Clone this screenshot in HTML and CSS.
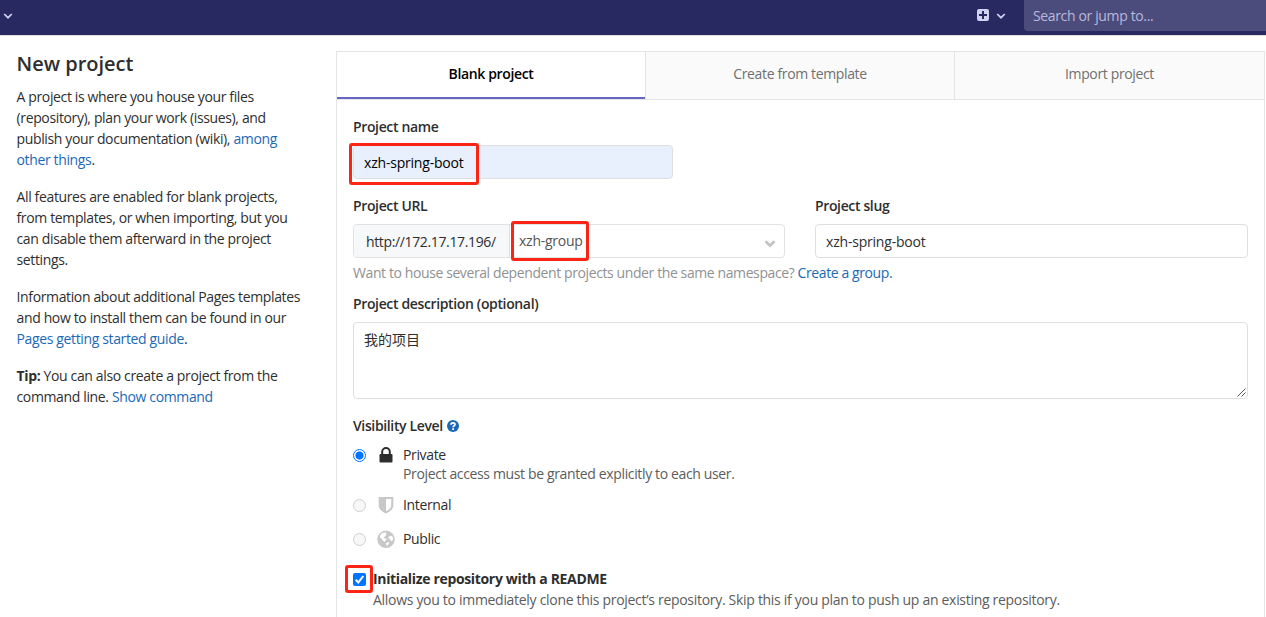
FILE: index.html
```html
<!DOCTYPE html>
<html lang="en">
<head>
<meta charset="utf-8">
<title>New project</title>
<link rel="stylesheet" href="styles.css">
</head>
<body>
<header class="navbar">
  <svg class="caret" width="10" height="6" viewBox="0 0 10 6"><path d="M1.2 1 5 4.7 8.8 1"/></svg>
  <div class="nav-right">
    <svg class="plus" width="12" height="12" viewBox="0 0 12 12"><rect width="12" height="12" rx="2" fill="#d1d1f0"/><path d="M6 2v8M2 6h8" stroke="#292961" stroke-width="2"/></svg>
    <svg class="caret" width="10" height="6" viewBox="0 0 10 6"><path d="M1.2 1 5 4.7 8.8 1"/></svg>
    <div class="search"><span>Search or jump to...</span></div>
  </div>
</header>
<div class="page">
  <aside class="sidebar">
    <h1>New project</h1>
    <p>A project is where you house your files<br>(repository), plan your work (issues), and<br>publish your documentation (wiki), <a>among<br>other things</a>.</p>
    <p>All features are enabled for blank projects,<br>from templates, or when importing, but you<br>can disable them afterward in the project<br>settings.</p>
    <p>Information about additional Pages templates<br>and how to install them can be found in our<br><a>Pages getting started guide</a>.</p>
    <p><strong>Tip:</strong> You can also create a project from the<br>command line. <a>Show command</a></p>
  </aside>
  <main class="panel">
    <nav class="tabs">
      <div class="tab active"><span>Blank project</span></div>
      <div class="tab"><span>Create from template</span></div>
      <div class="tab"><span>Import project</span></div>
    </nav>
    <form class="form">
      <div class="label">Project name</div>
      <div class="field name"><span class="value">xzh-spring-boot</span><i class="mark mark-name"></i></div>
      <div class="columns">
        <div class="column">
          <div class="label">Project URL</div>
          <div class="group">
            <div class="prefix"><span>http://172.17.17.196/</span></div>
            <div class="select"><span>xzh-group</span><svg width="12" height="8" viewBox="0 0 12 8"><path d="M1.500 1.300 6 5.600l4.500-4.300" fill="none" stroke="#c4c4c4" stroke-width="2.800"/></svg><i class="mark mark-group"></i></div>
          </div>
        </div>
        <div class="column">
          <div class="label">Project slug</div>
          <div class="field"><span class="value">xzh-spring-boot</span></div>
        </div>
      </div>
      <div class="help">Want to house several dependent projects under the same namespace? <a>Create a group.</a></div>
      <div class="label description">Project description (optional)</div>
      <div class="textarea"><span>我的项目</span><svg class="grip" width="9" height="9" viewBox="0 0 9 9"><path d="M.5 8.500l8-8M4.500 8.500l4-4" stroke="#555" stroke-width="1"/></svg></div>
      <div class="label visibility"><span>Visibility Level</span><svg width="12" height="12" viewBox="0 0 12 12"><circle cx="6" cy="6" r="6" fill="#1b69b6"/><path d="M4 4.700C4 2.300 8 2.200 8 4.500 8 5.800 6.100 5.800 6.100 7.300" fill="none" stroke="#fff" stroke-width="1.700"/><path d="M5.200 8.200h1.800v1.700H5.200z" fill="#fff"/></svg></div>
      <div class="option">
        <i class="radio checked"></i>
        <svg class="icon" width="18" height="18" viewBox="0 0 18 18"><path d="M5.200 9V5.800a3.800 3.800 0 0 1 7.600 0v3.200" fill="none" stroke="#2e2e2e" stroke-width="2"/><rect x="2.500" y="8" width="13" height="8.500" rx="1" fill="#2e2e2e"/></svg>
        <span>Private</span>
      </div>
      <div class="option-help">Project access must be granted explicitly to each user.</div>
      <div class="option internal">
        <i class="radio"></i>
        <svg class="icon" width="18" height="18" viewBox="0 0 18 18"><path d="M1.700 1h14.600v8.500c0 4-3.800 6.300-7.300 8.100-3.500-1.800-7.300-4.100-7.300-8.100z" fill="#c8c8c8"/><path d="M9 3h5.200v6.500c0 2.600-2.600 4.300-5.200 5.800z" fill="#fff"/></svg>
        <span>Internal</span>
      </div>
      <div class="option public">
        <i class="radio"></i>
        <svg class="icon" width="18" height="18" viewBox="0 0 18 18"><circle cx="9" cy="9.300" r="8.700" fill="#c8c8c8"/><path d="M3 5.500 5 3.300l3-.9 1.800.4-1.300 1.400 1 .9-1.700 1.400-1.300 1.700 2.500.4.600 1.200-1.200.7-.6 1.400-2-1.400-1.300-2.100L3 7.800z" fill="#fff"/><path d="m11.300 7 2.300-1.200 1.700.5.900 2.500-.8 2-1.800-.1-.5-1.700-1.500-.5zM9 13.300l1.900-1.400 1.500.8-1.300 2-1.400 1.300z" fill="#fff"/></svg>
        <span>Public</span>
      </div>
      <div class="readme">
        <svg width="13" height="13" viewBox="0 0 13 13"><rect width="13" height="13" rx="2" fill="#0075ff"/><path d="m2.700 6.800 2.600 2.600 5-6.400" fill="none" stroke="#fff" stroke-width="2"/></svg>
        <b>Initialize repository with a README</b><i class="mark mark-readme"></i>
      </div>
      <div class="readme-help">Allows you to immediately clone this project’s repository. Skip this if you plan to push up an existing repository.</div>
    </form>
  </main>
</div>
</body>
</html>
```
FILE: styles.css
```css
* { box-sizing: border-box; }
body {
  margin: 0;
  height: 617px;
  overflow: hidden;
  background: #fff;
  color: #2e2e2e;
  font: 14px/21px "Open Sans", "Noto Sans CJK SC", sans-serif;
  letter-spacing: -0.36px;
  white-space: nowrap;
}
a { color: #1b69b6; }
.navbar {
  height: 36px;
  padding-left: 3px;
  display: flex;
  align-items: center;
  justify-content: space-between;
  background: #292961;
  border-bottom: 1px solid #dfdfdf;
}
.caret { display: block; margin-top: -4px; fill: none; stroke: #d1d1f0; stroke-width: 1.7; }
.nav-right { display: flex; align-items: center; height: 35px; }
.plus { margin: -5px 7px 0 0; }
.nav-right .caret { margin-right: 18px; }
.search {
  align-self: flex-start;
  width: 242px;
  height: 31px;
  padding: 5px 9px;
  background: #4c4c7c;
  border-radius: 0 0 0 4px;
  color: #b8b8dc;
}
.page { display: flex; height: 581px; overflow: hidden; }
.sidebar { width: 336px; padding: 12px 0 0 16.5px; }
h1 { margin: 0 0 6px; font-size: 20px; line-height: 32px; font-weight: 550; letter-spacing: 0; }
.sidebar p { margin: 0 0 16px; }
.panel { width: 929px; margin-top: 15px; border: 1px solid #e5e5e5; border-bottom: 0; }
.tabs { display: grid; grid-template-columns: 308px 309px 1fr; height: 48px; border-bottom: 1px solid #e5e5e5; }
.tab {
  padding-top: 11px;
  text-align: center;
  background: #fafafa;
  color: #707070;
  border-left: 1px solid #e5e5e5;
}
.tab.active { background: #fff; color: #000; font-weight: 600; border-left: 0; border-bottom: 2px solid #6666c4; }
.form { padding: 16px 16px 0; }
.label { height: 29px; font-weight: 600; }
.field {
  position: relative;
  height: 34px;
  padding: 6px 10px;
  border: 1px solid #dfdfdf;
  border-radius: 4px;
  letter-spacing: -0.2px;
}
.name { width: 320px; background: #e8f0fe; color: #000; }
.columns { display: grid; grid-template-columns: 432px 433px; gap: 30px; margin-top: 16px; }
.group { display: flex; height: 34px; border: 1px solid #e2e2e2; border-radius: 4px; }
.prefix { width: 156px; padding: 6px 12px; background: #f7f8fa; border-right: 1px solid #dfdfdf; border-radius: 3px 0 0 3px; }
.select {
  position: relative;
  flex: 1;
  display: flex;
  justify-content: space-between;
  padding: 5px 8px 0 9px;
  color: #555;
  letter-spacing: -0.25px;
}
.select svg { margin-top: 10px; }
.help { margin-top: 4px; color: #919191; letter-spacing: -0.4px; }
.description { margin-top: 10px; }
.textarea {
  position: relative;
  height: 77px;
  padding: 6px 10px;
  border: 1px solid #dfdfdf;
  border-radius: 4px;
  letter-spacing: 0;
}
.grip { position: absolute; right: 1px; bottom: 1px; }
.visibility { display: flex; gap: 4px; margin-top: 16px; height: 29px; }
.visibility svg { margin-top: 5px; }
.option, .readme { display: flex; align-items: center; height: 21px; }
.radio { width: 13px; height: 13px; margin-top: 1px; border: 1px solid #cfcfcf; border-radius: 50%; background: #f7f7f7; }
.radio.checked { border-color: #0075ff; background: radial-gradient(circle, #0075ff 0 3.7px, #fff 4.4px); }
.icon { margin: 1px 8px 0 11px; }
.option-help { height: 21px; margin: -2px 0 10px 50px; color: #5c5c5c; }
.internal { margin-bottom: 13px; }
.public { margin-bottom: 19px; }
.readme { position: relative; gap: 7px; }
.readme svg { margin-top: 1px; }
.readme b { letter-spacing: -0.34px; }
.readme-help { margin-left: 20px; color: #5c5c5c; letter-spacing: -0.3px; }
.mark { position: absolute; border: 3px solid #fc2414; border-radius: 3px; }
.mark-name { left: -5px; top: -3px; width: 130px; height: 42px; }
.mark-group { left: 1px; top: -4px; width: 78px; height: 40px; }
.mark-readme { left: -8px; top: -3px; width: 28px; height: 28px; }
```
